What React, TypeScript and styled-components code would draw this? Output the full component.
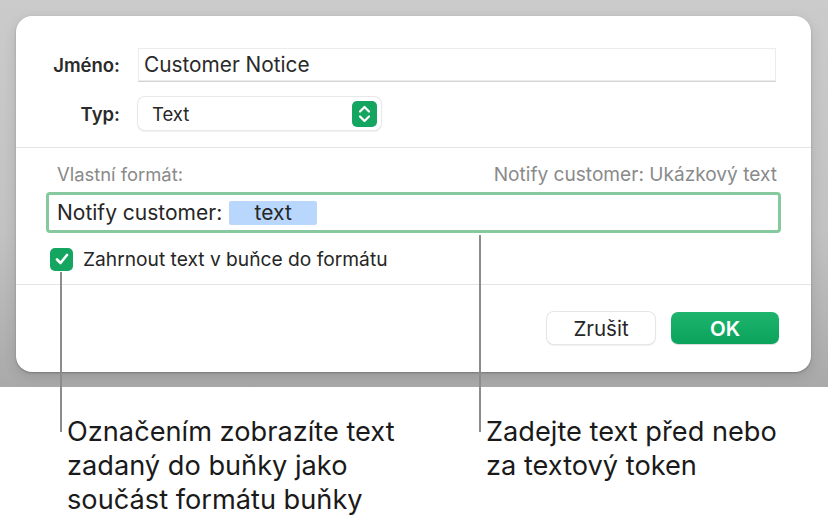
import React from 'react';
import styled, {createGlobalStyle} from "styled-components";

const GlobalStyle = createGlobalStyle`
  html, body {
    margin: 0;
    padding: 0;
    background: #ffffff;
  }
  body {
    font-family: Inter, "Liberation Sans", Arial, sans-serif;
    color: #262626;
  }
`

const SelectArrows = () => (
    <svg width="25" height="26" viewBox="0 0 25 26">
        <rect x="0" y="0" width="25" height="26" rx="5" fill="#14a660"/>
        <path d="M8 10.5 L12.5 6 L17 10.5" fill="none" stroke="#fff" strokeWidth="2.2" strokeLinecap="round" strokeLinejoin="round"/>
        <path d="M8 15.5 L12.5 20 L17 15.5" fill="none" stroke="#fff" strokeWidth="2.2" strokeLinecap="round" strokeLinejoin="round"/>
    </svg>
);

const CheckMark = () => (
    <svg width="14" height="12" viewBox="0 0 14 12">
        <path d="M2 6.5 L5.5 10 L12 2" fill="none" stroke="#fff" strokeWidth="2.6" strokeLinecap="round" strokeLinejoin="round"/>
    </svg>
);

export default function App() {
    return (
        <Page>
            <GlobalStyle/>
            <Backdrop>
                <Dialog>
                    <FieldsGrid>
                        <Label>Jméno:</Label>
                        <NameField>Customer Notice</NameField>
                        <Label>Typ:</Label>
                        <SelectBox>
                            <span>Text</span>
                            <SelectArrows/>
                        </SelectBox>
                    </FieldsGrid>
                    <Divider/>
                    <FormatSection>
                        <FormatHeader>
                            <span>Vlastní formát:</span>
                            <Preview>Notify customer: Ukázkový text</Preview>
                        </FormatHeader>
                        <FormatField>
                            Notify customer:
                            <Token>text</Token>
                        </FormatField>
                        <CheckRow>
                            <CheckBox><CheckMark/></CheckBox>
                            Zahrnout text v buňce do formátu
                        </CheckRow>
                    </FormatSection>
                    <Divider/>
                    <Footer>
                        <Button>Zrušit</Button>
                        <Button primary>OK</Button>
                    </Footer>
                </Dialog>
            </Backdrop>
            <Callouts>
                <CalloutText>Označením zobrazíte text zadaný do buňky jako součást formátu buňky</CalloutText>
                <CalloutText>Zadejte text před nebo za textový token</CalloutText>
            </Callouts>
            <Leader left={60} top={272} height={160}/>
            <Leader left={479} top={235} height={197}/>
        </Page>
    );
}

const Page = styled.div`
  position: relative;
  width: 828px;
  height: 529px;
  overflow: hidden;
  background: #ffffff;
`

const Backdrop = styled.div`
  height: 387px;
  box-sizing: border-box;
  padding: 16px 17px 0 16px;
  background: linear-gradient(180deg, #cbcbcb 0%, #c2c2c2 60%, #a9a9a9 100%);
`

const Dialog = styled.div`
  height: 356px;
  background: #ffffff;
  border-radius: 16px;
  box-shadow: 0 1px 2px rgba(0, 0, 0, 0.25), 0 4px 14px rgba(0, 0, 0, 0.12);
  display: flex;
  flex-direction: column;
`

const FieldsGrid = styled.div`
  display: grid;
  grid-template-columns: 104px 1fr;
  column-gap: 18px;
  row-gap: 16px;
  align-items: center;
  padding: 32px 35px 17px 0;
`

const Label = styled.div`
  text-align: right;
  font-weight: 600;
  font-size: 18.5px;
  color: #2a2a2a;
`

const NameField = styled.div`
  height: 33px;
  box-sizing: border-box;
  padding: 0 5px;
  display: flex;
  align-items: center;
  font-size: 20.8px;
  color: #2a2a2a;
  border: 1px solid #ececec;
  box-shadow: 0 1px 0 #d4d4d4;
`

const SelectBox = styled.div`
  width: 243px;
  height: 33px;
  box-sizing: border-box;
  padding: 0 4px 0 14px;
  display: flex;
  align-items: center;
  justify-content: space-between;
  font-size: 18.5px;
  color: #262626;
  border-radius: 7px;
  background: #fff;
  box-shadow: 0 0 0 1px #e8e8e8, 0 1px 2px rgba(0, 0, 0, 0.2);
`

const Divider = styled.div`
  height: 1px;
  background: #e3e3e3;
`

const FormatSection = styled.div`
  padding: 14px 30px 0 30px;
  height: 136px;
  box-sizing: border-box;
`

const FormatHeader = styled.div`
  display: flex;
  justify-content: space-between;
  align-items: center;
  padding: 2px 4px 0 11px;
  font-size: 18.4px;
  color: #8a8a8a;
  height: 20px;
  line-height: 20px;
`

const Preview = styled.span`
  font-size: 19.1px;
`

const FormatField = styled.div`
  margin-top: 8px;
  height: 41px;
  box-sizing: border-box;
  border: 3.5px solid #86c99e;
  border-radius: 4px;
  padding: 0 8px;
  display: flex;
  align-items: center;
  gap: 7px;
  font-size: 21px;
  color: #262626;
`

const Token = styled.span`
  display: inline-flex;
  align-items: center;
  justify-content: center;
  width: 88px;
  height: 24px;
  border-radius: 2px;
  background: #b9d7fc;
  font-size: 21px;
  color: #262626;
`

const CheckRow = styled.div`
  margin-top: 14px;
  padding-left: 4px;
  display: flex;
  align-items: center;
  gap: 10px;
  font-size: 19.2px;
  color: #262626;
`

const CheckBox = styled.span`
  width: 23px;
  height: 23px;
  border-radius: 5px;
  background: #14a660;
  display: inline-flex;
  align-items: center;
  justify-content: center;
`

const Footer = styled.div`
  flex: 1;
  display: flex;
  justify-content: flex-end;
  gap: 16px;
  padding: 27px 32px 0 0;
`

const Button = styled.div<{ primary?: boolean }>`
  width: 108px;
  height: 32px;
  box-sizing: border-box;
  border-radius: 7px;
  display: flex;
  align-items: center;
  justify-content: center;
  font-size: 20.5px;
  background: ${p => p.primary ? 'linear-gradient(180deg, #1fb46e 0%, #0aa35c 100%)' : '#ffffff'};
  color: ${p => p.primary ? '#ffffff' : '#262626'};
  font-weight: ${p => p.primary ? 600 : 'normal'};
  box-shadow: ${p => p.primary ? '0 1px 1px rgba(0, 0, 0, 0.15)' : '0 0 0 1px #e6e6e6, 0 1px 2px rgba(0, 0, 0, 0.2)'};
`

const Callouts = styled.div`
  display: grid;
  grid-template-columns: 419px 1fr;
  padding: 28px 20px 0 67px;
`

const CalloutText = styled.div`
  font-size: 27.2px;
  line-height: 34px;
  color: #1a1a1a;
  max-width: 305px;
  &:first-child {
    max-width: 345px;
  }
`

const Leader = styled.div<{ left: number; top: number; height: number }>`
  position: absolute;
  left: ${p => p.left}px;
  top: ${p => p.top}px;
  height: ${p => p.height}px;
  width: 2px;
  background: #8c8c8c;
`
